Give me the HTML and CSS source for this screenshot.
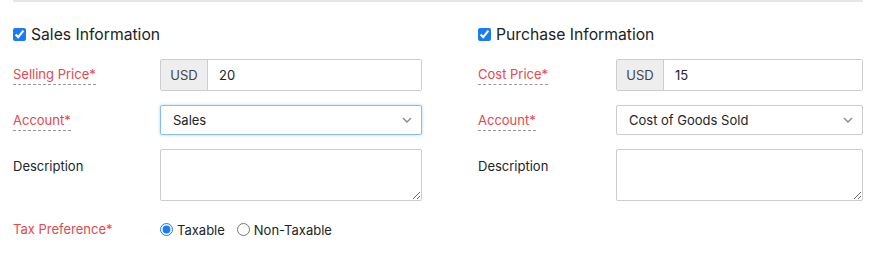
FILE: index.html
```html
<!DOCTYPE html>
<html lang="en">
<head>
    <meta charset="UTF-8">
    <meta name="viewport" content="width=device-width, initial-scale=1.0">
    <title>Item - Sales and Purchase</title>
    <link rel="stylesheet" href="styles.css">
</head>
<body>
    <div class="itemForm">
        <div class="section sales">
            <label class="sectionHead">
                <input type="checkbox" checked>
                Sales Information
            </label>
            <div class="row">
                <div class="label required"><span class="tip">Selling Price*</span></div>
                <div class="field">
                    <div class="priceGroup">
                        <span class="currency">USD</span>
                        <input type="text" value="20">
                    </div>
                </div>
            </div>
            <div class="row">
                <div class="label required"><span class="tip">Account*</span></div>
                <div class="field">
                    <div class="selectBox focused">
                        <span>Sales</span>
                        <svg class="chevron" width="10" height="6" viewBox="0 0 10 6"><path d="M1 1l4 4 4-4" fill="none" stroke="#888" stroke-width="1.4"/></svg>
                    </div>
                </div>
            </div>
            <div class="row descRow">
                <div class="label"><span>Description</span></div>
                <div class="field"><textarea></textarea></div>
            </div>
            <div class="row radioRow">
                <div class="label required"><span>Tax Preference*</span></div>
                <div class="field radios">
                    <label><input type="radio" name="tax" checked> Taxable</label>
                    <label><input type="radio" name="tax"> Non-Taxable</label>
                </div>
            </div>
        </div>
        <div class="section purchase">
            <label class="sectionHead">
                <input type="checkbox" checked>
                Purchase Information
            </label>
            <div class="row">
                <div class="label required"><span class="tip">Cost Price*</span></div>
                <div class="field">
                    <div class="priceGroup">
                        <span class="currency">USD</span>
                        <input type="text" value="15">
                    </div>
                </div>
            </div>
            <div class="row">
                <div class="label required"><span class="tip">Account*</span></div>
                <div class="field">
                    <div class="selectBox">
                        <span>Cost of Goods Sold</span>
                        <svg class="chevron" width="10" height="6" viewBox="0 0 10 6"><path d="M1 1l4 4 4-4" fill="none" stroke="#888" stroke-width="1.4"/></svg>
                    </div>
                </div>
            </div>
            <div class="row descRow">
                <div class="label"><span>Description</span></div>
                <div class="field"><textarea></textarea></div>
            </div>
        </div>
    </div>
</body>
</html>
```
FILE: styles.css
```css
body {
    margin: 0;
    background: #fff;
    color: #212529;
    font-family: 'Inter', 'Noto Sans', Arial, sans-serif;
    font-size: 13px;
}
.itemForm {
    margin: 0 13px;
    border-top: 2px solid #e6e6e6;
    padding-top: 20px;
    display: grid;
    grid-template-columns: 409px 385px;
    column-gap: 56px;
    width: 850px;
}
.section {
    --label-w: 147px;
}
.section.purchase {
    --label-w: 138px;
}
.sectionHead {
    display: flex;
    align-items: center;
    height: 24px;
    font-size: 15.7px;
    color: #222;
    margin-bottom: 13px;
}
.sectionHead input {
    margin: 0 5px 0 0;
    width: 13px;
    height: 13px;
    accent-color: #1b7cf2;
}
.row {
    display: grid;
    grid-template-columns: var(--label-w) minmax(0, 1fr);
    margin-bottom: 14px;
}
.row.descRow {
    margin-bottom: 19px;
}
.field {
    min-width: 0;
}
.label {
    padding-top: 6px;
    line-height: 19px;
}
.descRow .label {
    padding-top: 8px;
}
.label.required {
    color: #e5484d;
}
.label .tip {
    display: inline-block;
    border-bottom: 1px dashed #999;
}
.priceGroup {
    display: flex;
    height: 32px;
    border: 1px solid #ccc;
    border-radius: 2px;
    box-sizing: border-box;
}
.currency {
    width: 46px;
    flex: none;
    background: #eee;
    color: #444;
    border-right: 1px solid #ccc;
    display: flex;
    align-items: center;
    justify-content: center;
}
.priceGroup input {
    flex: 1;
    width: 0;
    border: none;
    outline: none;
    font: inherit;
    color: #212529;
    padding: 0 11px;
    min-width: 0;
}
.selectBox {
    height: 30px;
    box-sizing: border-box;
    border: 1px solid #ccc;
    border-radius: 2px;
    display: flex;
    align-items: center;
    justify-content: space-between;
    padding: 0 9px 0 12px;
}
.selectBox.focused {
    border-color: #86bdf7;
    box-shadow: 0 0 3px rgba(64, 150, 240, 0.45);
}
textarea {
    display: block;
    width: 100%;
    height: 52px;
    box-sizing: border-box;
    border: 1px solid #ccc;
    border-radius: 2px;
    font: inherit;
    margin: 0;
}
.radioRow .label {
    padding-top: 0;
}
.radios {
    display: flex;
    align-items: center;
    gap: 12px;
    height: 19px;
}
.radios label {
    display: flex;
    align-items: center;
}
.radios input {
    margin: 0 4px 0 0;
    width: 13px;
    height: 13px;
    accent-color: #1b7cf2;
}
```
